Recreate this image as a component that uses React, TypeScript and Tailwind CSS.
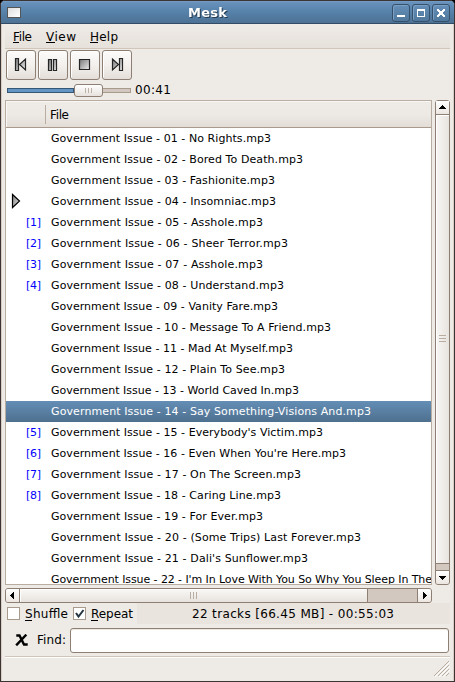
import React from "react";

type Track = { title: string; queue?: string; width: number };

const tracks: Track[] = [
  { title: "01 - No Rights.mp3", width: 220 },
  { title: "02 - Bored To Death.mp3", width: 252 },
  { title: "03 - Fashionite.mp3", width: 224 },
  { title: "04 - Insomniac.mp3", width: 225 },
  { title: "05 - Asshole.mp3", queue: "[1]", width: 212 },
  { title: "06 - Sheer Terror.mp3", queue: "[2]", width: 237 },
  { title: "07 - Asshole.mp3", queue: "[3]", width: 212 },
  { title: "08 - Understand.mp3", queue: "[4]", width: 233 },
  { title: "09 - Vanity Fare.mp3", width: 227 },
  { title: "10 - Message To A Friend.mp3", width: 280 },
  { title: "11 - Mad At Myself.mp3", width: 242 },
  { title: "12 - Plain To See.mp3", width: 234 },
  { title: "13 - World Caved In.mp3", width: 248 },
  { title: "14 - Say Something-Visions And.mp3", width: 320 },
  { title: "15 - Everybody's Victim.mp3", queue: "[5]", width: 272 },
  { title: "16 - Even When You're Here.mp3", queue: "[6]", width: 295 },
  { title: "17 - On The Screen.mp3", queue: "[7]", width: 250 },
  { title: "18 - Caring Line.mp3", queue: "[8]", width: 230 },
  { title: "19 - For Ever.mp3", width: 212 },
  { title: "20 - (Some Trips) Last Forever.mp3", width: 310 },
  { title: "21 - Dali's Sunflower.mp3", width: 257 },
  { title: "22 - I'm In Love With You So Why You Sleep In The", width: 381 },
];

/* A label whose glyphs are spaced to fill a fixed width. */
function Fit({ text, width, size, bold, color = "#000" }: { text: string; width: number; size: number; bold?: boolean; color?: string }) {
  return (
    <svg width={width} height="18" className="block shrink-0 overflow-visible">
      <text x="0" y="13" fontSize={size} fontWeight={bold ? 700 : 400} fill={color} textLength={width} lengthAdjust="spacing">
        {text}
      </text>
    </svg>
  );
}

function TitleButton({ children }: { children: React.ReactNode }) {
  return (
    <div className="h-[18px] w-[18px] rounded-[3px] border border-[#35506b] bg-gradient-to-b from-[#6590b9] to-[#50789c] shadow-[inset_1px_1px_0_#7ba0c3]">
      <svg width="16" height="16" className="block" shapeRendering="crispEdges">{children}</svg>
    </div>
  );
}

function ToolButton({ children }: { children: React.ReactNode }) {
  return (
    <div className="h-[30px] w-[30px] rounded-[3px] border border-[#8d7f74] bg-gradient-to-b from-[#fdfcfb] via-[#f3f0ed] to-[#e4ded8] shadow-[inset_1px_1px_0_#fff]">
      <svg width="28" height="28" className="block">
        <g fill="url(#metal)" stroke="#252525" strokeWidth="1.2">{children}</g>
      </svg>
    </div>
  );
}

function Check({ on }: { on?: boolean }) {
  return (
    <div className="h-[13px] w-[13px] shrink-0 border border-[#a99a8e] bg-white">
      {on && (
        <svg width="11" height="11" className="block">
          <path d="M2 5 L4.5 8.5 L9.5 2" fill="none" stroke="#243441" strokeWidth="2" />
        </svg>
      )}
    </div>
  );
}

export default function App() {
  return (
    <div className="h-[682px] w-[455px] overflow-hidden bg-black font-['DejaVu_Sans',sans-serif] text-[12px] leading-[18px] text-black">
      <svg width="0" height="0" className="absolute">
        <defs>
          <linearGradient id="metal" x1="0" y1="0" x2="1" y2="1">
            <stop offset="0" stopColor="#777" />
            <stop offset="1" stopColor="#eee" />
          </linearGradient>
        </defs>
      </svg>
      <div className="flex h-[682px] w-[455px] flex-col overflow-hidden rounded-t-[5px] border border-[#3b3433] bg-[#eeebe7]">
        <header className="flex h-[23px] shrink-0 items-center border-b border-[#334c65] bg-gradient-to-b from-[#6a94be] via-[#5681a9] to-[#4d7294] pr-[4px] pl-[6px] shadow-[inset_0_1px_0_#729bc3]">
          <div className="h-[11px] w-[14px] border border-[#555] bg-gradient-to-br from-[#dedede] to-white" />
          <div className="ml-[167px] h-[20px] pt-[2px] drop-shadow-[1px_1px_0_#263c50]">
            <Fit text="Mesk" width={39} size={13} bold color="#fff" />
          </div>
          <div className="ml-auto flex gap-[2px] pt-px">
            <TitleButton><rect x="4" y="10" width="8" height="2" fill="#fff" /></TitleButton>
            <TitleButton><path d="M4 4h8v8h-8z M5 6v5h6v-5z" fill="#fff" fillRule="evenodd" /></TitleButton>
            <TitleButton><path d="M4 4h2v1h1v1h2v-1h1v-1h2v2h-1v1h-1v2h1v1h1v2h-2v-1h-1v-1h-2v1h-1v1h-2v-2h1v-1h1v-2h-1v-1h-1z" fill="#fff" /></TitleButton>
          </div>
        </header>

        <div className="flex min-h-0 flex-1 flex-col border-x border-[#d8cdc5] pr-[3px] pl-[3px]">
          <nav className="flex h-[25px] shrink-0 gap-[15px] border-b border-[#d2c6bb] bg-gradient-to-b from-[#efebe7] to-[#e6e1db] pt-[4px] pl-[8px]">
            <span className="flex flex-col"><Fit text="File" width={19} size={12} /><i className="-mt-[4px] h-px w-[6px] shrink-0 bg-black" /></span>
            <span className="-ml-px flex flex-col"><Fit text="View" width={30} size={12} /><i className="-mt-[4px] h-px w-[9px] shrink-0 bg-black" /></span>
            <span className="-ml-px flex flex-col"><Fit text="Help" width={28} size={12} /><i className="-mt-[4px] h-px w-[8px] shrink-0 bg-black" /></span>
          </nav>

          <div className="mt-px flex h-[30px] shrink-0 gap-[2px] pl-px">
            <ToolButton><path d="M8.5 7.5h3v12h-3z M18.5 8v11l-6-5.5z" /></ToolButton>
            <ToolButton><path d="M9.5 8.5h3v11h-3z M14.5 8.5h3v11h-3z" /></ToolButton>
            <ToolButton><path d="M8.5 8.5h10v10h-10z" /></ToolButton>
            <ToolButton><path d="M9.5 8v11l6-5.5z M16.5 7.5h3v12h-3z" /></ToolButton>
          </div>

          <div className="flex h-[20px] shrink-0 items-center pl-[2px]">
            <div className="flex w-[124px] items-center">
              <div className="h-[5px] w-[67px] border border-[#365675] bg-[#6295c3]" />
              <div className="flex h-[13px] w-[29px] items-center justify-center gap-[2px] rounded-[3px] border border-[#8d7f74] bg-gradient-to-b from-white to-[#e7e2dd]">
                <i className="h-[5px] w-px bg-[#bdb2a6]" /><i className="h-[5px] w-px bg-[#bdb2a6]" /><i className="h-[5px] w-px bg-[#bdb2a6]" />
              </div>
              <div className="h-[5px] w-[28px] border border-l-0 border-[#a89a8d] bg-[#d2c8bf]" />
            </div>
            <div className="ml-[4px]"><Fit text="00:41" width={36} size={12} /></div>
          </div>

          <div className="flex h-[485px] shrink-0 gap-[3px]">
            <div className="h-[485px] w-[427px] overflow-hidden border border-[#b9ada2] bg-white">
              <div className="flex h-[27px] items-center border-b border-[#a99a8e] bg-gradient-to-b from-[#efebe7] via-[#edeae6] to-[#e4ddd7] shadow-[inset_1px_1px_0_#f9f7f5]">
                <div className="h-[19px] w-[40px] border-r border-[#b9ada2]" />
                <div className="pt-[2px] pl-[4px]"><Fit text="File" width={19} size={12} /></div>
              </div>
              {tracks.map((track, i) => (
                <div key={track.title} className={`flex h-[21px] items-center pb-[2px] ${i === 13 ? "bg-gradient-to-b from-[#648eb6] to-[#4e708e]" : ""}`}>
                  <div className="w-[20px] shrink-0 pl-[5px]">
                    {i === 3 && (
                      <svg width="12" height="16" className="block"><path d="M1.5 1.5v13l7-6.5z" fill="url(#metal)" stroke="#000" strokeWidth="1.2" /></svg>
                    )}
                  </div>
                  <div className="w-[25px] shrink-0">{track.queue && <Fit text={track.queue} width={15} size={11} color="#0000ff" />}</div>
                  <Fit text={`Government Issue - ${track.title}`} width={track.width} size={11} color={i === 13 ? "#fff" : "#000"} />
                </div>
              ))}
            </div>

            <div className="flex w-[15px] flex-col rounded-[3px] border border-[#8d7f74] bg-[#d2c8bf]">
              <div className="h-[14px] border-b border-[#8d7f74] bg-gradient-to-b from-white to-[#ece6e1]">
                <svg width="13" height="13" shapeRendering="crispEdges" className="block"><path d="M6 4h1v1h1v1h1v1h1v1h-7v-1h1v-1h1v-1h1z" /></svg>
              </div>
              <div className="flex h-[449px] flex-col items-center justify-center gap-[2px] border-b border-[#8d7f74] bg-gradient-to-r from-[#f8f7f5] to-[#e7e2dd] pb-[2px] shadow-[inset_1px_1px_0_#fff]">
                <i className="h-px w-[7px] bg-[#b9ada2]" /><i className="h-px w-[7px] bg-[#b9ada2]" /><i className="h-px w-[7px] bg-[#b9ada2]" />
              </div>
              <div className="mt-auto h-[14px] rounded-b-[2px] border-t border-[#8d7f74] bg-gradient-to-b from-white to-[#ece6e1]">
                <svg width="13" height="13" shapeRendering="crispEdges" className="block"><path d="M3 5h7v1h-1v1h-1v1h-1v1h-1v-1h-1v-1h-1v-1h-1z" /></svg>
              </div>
            </div>
          </div>

          <div className="mt-[3px] flex h-[15px] w-[427px] shrink-0 rounded-[3px] border border-[#8d7f74] bg-[#d2c8bf]">
            <div className="w-[14px] rounded-l-[2px] border-r border-[#8d7f74] bg-gradient-to-b from-white to-[#ece6e1]">
              <svg width="13" height="13" shapeRendering="crispEdges" className="block"><path d="M8 3v7h-1v-1h-1v-1h-1v-1h-1v-1h1v-1h1v-1h1v-1z" /></svg>
            </div>
            <div className="flex w-[348px] items-center justify-center gap-[2px] border-r border-[#8d7f74] bg-gradient-to-b from-[#faf9f7] to-[#e7e2dd] shadow-[inset_1px_1px_0_#fff]">
              <i className="h-[7px] w-px bg-[#b9ada2]" /><i className="h-[7px] w-px bg-[#b9ada2]" /><i className="h-[7px] w-px bg-[#b9ada2]" />
            </div>
            <div className="ml-auto w-[14px] rounded-r-[2px] border-l border-[#8d7f74] bg-gradient-to-b from-white to-[#ece6e1]">
              <svg width="13" height="13" shapeRendering="crispEdges" className="block"><path d="M5 3v7h1v-1h1v-1h1v-1h1v-1h-1v-1h-1v-1h-1v-1z" /></svg>
            </div>
          </div>

          <div className="flex h-[21px] shrink-0 items-center pl-[2px]">
            <Check />
            <span className="ml-[5px] flex h-[18px] flex-col"><Fit text="Shuffle" width={43} size={12} /><i className="-mt-[3px] h-px w-[7px] shrink-0 bg-black" /></span>
            <div className="ml-[5px]"><Check on /></div>
            <span className="ml-[5px] flex h-[18px] flex-col"><Fit text="Repeat" width={42} size={12} /><i className="-mt-[3px] h-px w-[7px] shrink-0 bg-black" /></span>
            <div className="ml-[4px] flex h-[21px] flex-1 items-center bg-[#e9e4de] pl-[55px]">
              <Fit text="22 tracks [66.45 MB] - 00:55:03" width={202} size={12} />
            </div>
          </div>

          <div className="mt-[3px] flex h-[26px] shrink-0 items-center pl-[10px]">
            <svg width="13" height="12" className="shrink-0"><path d="M2.5 1.5L4.5 1.5L9 10.5H11.5M10.5 1.5L2 10.5" fill="none" stroke="#000" strokeWidth="2.4" strokeLinecap="square" /></svg>
            <div className="ml-[9px]"><Fit text="Find:" width={29} size={12} /></div>
            <div className="mr-px ml-[4px] h-[25px] flex-1 rounded-[3px] border border-[#8d7f74] bg-white shadow-[inset_0_1px_0_#eee8e3]" />
          </div>

          <footer className="mt-[3px] flex flex-1 items-end justify-end border-t border-[#d2c6bb] pb-[4px] shadow-[inset_0_1px_0_#fff]">
            <svg width="17" height="17">
              <path d="M1 16L16 1M5 16L16 5M9 16L16 9M13 16L16 13" stroke="#b9ada2" />
              <path d="M2 17L17 2M6 17L17 6M10 17L17 10" stroke="#fff" />
            </svg>
          </footer>
        </div>
      </div>
    </div>
  );
}
